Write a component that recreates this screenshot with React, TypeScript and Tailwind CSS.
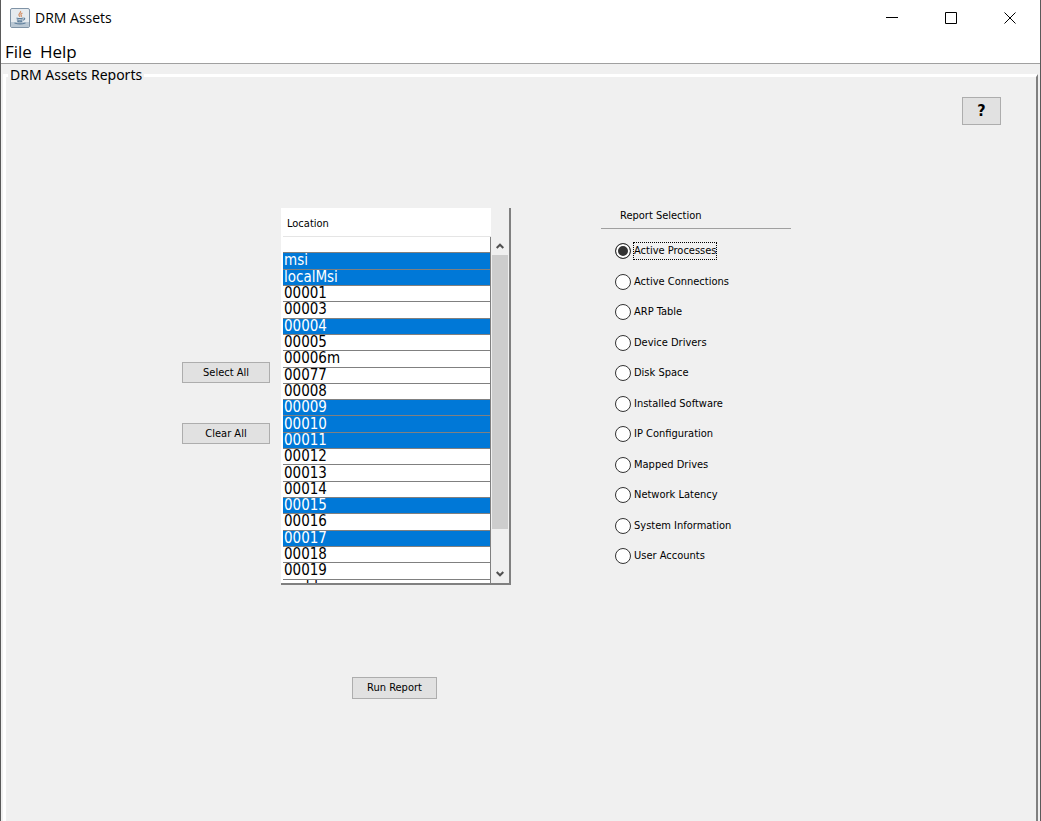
import React, { useState } from 'react';

const locations = [
    '', 'msi', 'localMsi', '00001', '00003', '00004', '00005', '00006m', '00077', '00008', '00009',
    '00010', '00011', '00012', '00013', '00014', '00015', '00016', '00017', '00018', '00019', 'nmhk',
];

const reports = [
    'Active Processes', 'Active Connections', 'ARP Table', 'Device Drivers', 'Disk Space', 'Installed Software',
    'IP Configuration', 'Mapped Drives', 'Network Latency', 'System Information', 'User Accounts',
];

const initialSelection = ['msi', 'localMsi', '00004', '00009', '00010', '00011', '00015', '00017'];

const JavaIcon = () => (
    <svg width="20" height="20" viewBox="0 0 20 20" fill="none" aria-hidden="true">
        <rect x="0.5" y="0.5" width="19" height="19" rx="1.5" fill="#e6ebef" stroke="#7f93a6" />
        <path d="M1 14h18v4.500a.5.5 0 0 1-.5.500h-17a.5.5 0 0 1-.5-.500z" fill="#b9c7d3" />
        <path d="M10.500 3c1.300 1.700-2.700 2.800-1.500 4.500.4.600.9.900.8 1.500M12.500 5c-1.700.9-2.100 1.700-1.200 2.500.5.500.2 1-.2 1.400" stroke="#d3936c" strokeWidth="1.200" />
        <path d="M6.500 10c2 .7 4.500.7 6.500 0M6.800 11.800c1.800.6 4 .6 5.800 0M7.300 13.400c1.600.4 3.400.4 5 0M13.300 10c2.200-.2 1.700 1.700-.4 2.200M4.500 15c3 1 8 1 11 0" stroke="#5f7f9c" strokeWidth="1.100" />
    </svg>
);

const titleButtons = [
    { name: 'Minimize', path: 'M0 5.500h12' },
    { name: 'Maximize', path: 'M.5.5h11v11H.5z' },
    { name: 'Close', path: 'M.5.5l11 11M11.500.5l-11 11' },
];

const buttonClass = 'border border-[#adadad] bg-[#e1e1e1] text-[11px] leading-4 hover:bg-[#e5f1fb]';

export default function App() {
    const [selected, setSelected] = useState<string[]>(initialSelection);
    const [report, setReport] = useState('Active Processes');

    const toggle = (name: string) => {
        setSelected(selected.includes(name) ? selected.filter((s) => s !== name) : [...selected, name]);
    };

    return (
        <div className="flex min-h-screen flex-col border-x border-[#5a5a5a] bg-[#f0f0f0] font-['DejaVu_Sans_Condensed','Noto_Sans',sans-serif] text-black">
            <header className="flex h-9 items-center bg-white pl-[9px] pr-px font-['Open_Sans','Noto_Sans',sans-serif]">
                <JavaIcon />
                <h1 className="ml-[5px] text-[14px] leading-5">DRM Assets</h1>
                <div className="ml-auto flex h-full">
                    {titleButtons.map((b) => (
                        <button key={b.name} aria-label={b.name} className="flex w-[59px] items-center justify-center hover:bg-gray-200">
                            <svg width="12" height="12" viewBox="0 0 12 12" fill="none" stroke="#000">
                                <path d={b.path} />
                            </svg>
                        </button>
                    ))}
                </div>
            </header>

            <nav className="flex h-7 items-center gap-2 border-b border-[#a0a0a0] bg-white pl-1 pt-1 font-['Open_Sans','Noto_Sans',sans-serif] text-[17px] leading-6">
                <button>File</button>
                <button>Help</button>
            </nav>

            <fieldset className="mx-[2px] flex min-w-0 flex-1 flex-col border-l-3 border-r-2 border-t-3 border-t-white border-l-white border-r-[#808080]">
                <legend className="ml-[2px] px-[2px] font-['Noto_Sans',sans-serif] text-[14px] leading-[22px]">DRM Assets Reports</legend>

                <div className="flex justify-end pr-[35px] pt-[11px]">
                    <button aria-label="Help" className="h-7 w-[39px] border border-[#adadad] bg-[#e1e1e1] text-[16px] font-semibold leading-5">?</button>
                </div>

                <main className="flex items-start pl-44 pt-[83px]">
                    <div className="flex flex-col gap-10 pt-[154px]">
                        <button className={`${buttonClass} h-[21px] w-[88px]`} onClick={() => setSelected(locations)}>Select All</button>
                        <button className={`${buttonClass} h-[21px] w-[88px]`} onClick={() => setSelected([])}>Clear All</button>
                    </div>

                    <div className="ml-[11px] w-[230px]">
                        <div className="flex h-[377px] border-b-2 border-r-2 border-[#808080] bg-white">
                            <div className="min-w-0 flex-1 overflow-hidden pl-[2px]">
                                <table className="h-[388px] w-full border-separate border-spacing-0 text-left">
                                    <thead>
                                        <tr className="h-[29px]">
                                            <th scope="col" className="border-b border-[#e5e5e5] p-0 pl-1 pt-1 text-[11px] font-normal leading-4">Location</th>
                                        </tr>
                                    </thead>
                                    <tbody>
                                        {locations.map((name) => (
                                            <tr
                                                key={name}
                                                onClick={() => toggle(name)}
                                                className={selected.includes(name) ? 'bg-[#0078d7] text-white' : 'bg-white'}
                                            >
                                                <td className="border-b border-r border-[#808080] p-0 pl-px text-[15px] leading-[15px]">{name || '\u00a0'}</td>
                                            </tr>
                                        ))}
                                    </tbody>
                                </table>
                            </div>
                            <div className="flex w-[18px] flex-col items-center bg-[#f0f0f0] pt-[29px]">
                                <button aria-label="Scroll up" className="flex h-[18px] w-full items-center justify-center">
                                    <svg width="8" height="6" viewBox="0 0 8 6" fill="none" stroke="#505050" strokeWidth="2"><path d="M.7 5 4 1.700 7.300 5" /></svg>
                                </button>
                                <div className="h-[274px] w-4 bg-[#cdcdcd]" />
                                <button aria-label="Scroll down" className="mt-auto flex h-[18px] w-full items-center justify-center">
                                    <svg width="8" height="6" viewBox="0 0 8 6" fill="none" stroke="#505050" strokeWidth="2"><path d="M.7 1 4 4.300 7.300 1" /></svg>
                                </button>
                            </div>
                        </div>
                        <button className={`${buttonClass} ml-[71px] mt-[92px] h-[22px] w-[85px]`}>Run Report</button>
                    </div>

                    <section className="ml-[90px] w-[190px] text-[11px] leading-4">
                        <h2 className="h-[21px] border-b border-[#a0a0a0] pl-[19px]">Report Selection</h2>
                        <div role="radiogroup" aria-label="Report Selection" className="flex h-[335px] flex-col justify-between pl-3.5 pt-3.5">
                            {reports.map((name) => (
                                <label key={name} className="flex items-center gap-[3px]">
                                    <input
                                        type="radio"
                                        name="report"
                                        checked={report === name}
                                        onChange={() => setReport(name)}
                                        className="size-4 appearance-none rounded-full border border-[#333] bg-white checked:bg-[#333] checked:shadow-[inset_0_0_0_2px_white]"
                                    />
                                    <span className={report === name ? 'outline-1 outline-dotted outline-black' : ''}>{name}</span>
                                </label>
                            ))}
                        </div>
                    </section>
                </main>
            </fieldset>
        </div>
    );
}
